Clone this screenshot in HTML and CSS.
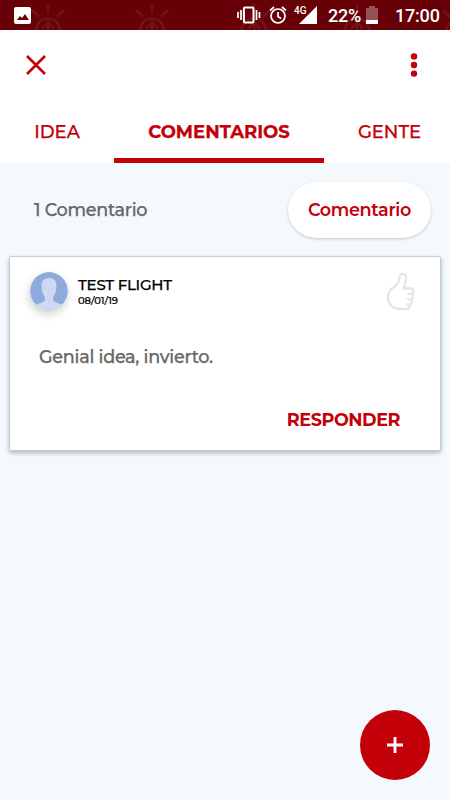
FILE: index.html
```html
<!DOCTYPE html>
<html lang="es">
<head>
<meta charset="utf-8">
<title>Comentarios</title>
<link rel="stylesheet" href="styles.css">
</head>
<body>
<div class="screen">
  <header class="status">
    <svg class="pattern" width="450" height="30" viewBox="0 0 450 30" aria-hidden="true">
      <defs>
        <g id="sun" fill="none" stroke="#721219" stroke-width="2.500" stroke-linecap="round">
          <path d="M-12.500 30A12.700 14 0 0 1 12.500 30M0 5v8M-15 11l5 5M15 11l-5 5M0 22v8M-5 28l5-6 5 6"/>
        </g>
      </defs>
      <use href="#sun" x="48"/><use href="#sun" x="152"/><use href="#sun" x="254"/><use href="#sun" x="357"/><use href="#sun" x="459"/>
    </svg>
    <svg class="photo" width="17" height="17" viewBox="0 0 17 17"><rect width="17" height="17" rx="2" fill="#fff"/><path d="M3 13l3-4 2 2 3-4 4 6z" fill="#680008"/></svg>
    <svg class="vibrate" width="24" height="18" viewBox="0 0 24 18" fill="none" stroke="#fff"><rect x="6.900" y="1.500" width="9.600" height="15" rx="1" stroke-width="2"/><path d="M1 6v6M4 4v10M19.500 4v10M22.500 6v6" stroke-width="1.700"/></svg>
    <svg class="alarm" width="18" height="18" viewBox="0 0 18 18" fill="none" stroke="#fff" stroke-width="1.700"><circle cx="9" cy="10" r="7"/><path d="M9 6v4.500l3 2M1 4.500L5 1M17 4.500L13 1"/></svg>
    <span class="network">4G</span>
    <svg class="signal" width="18" height="18" viewBox="0 0 18 18"><path d="M18 0v18H0z" fill="#fff"/></svg>
    <span class="percent">22%</span>
    <svg class="battery" width="12" height="18" viewBox="0 0 12 18"><path d="M3 0h6v2h3v16H0V2h3z" fill="#965157"/><path d="M0 14h12v4H0z" fill="#fff"/></svg>
    <span class="clock">17:00</span>
  </header>
  <div class="toolbar">
    <svg width="22" height="22" viewBox="0 0 22 22"><path d="M2 2l18 18M20 2L2 20" stroke="#c40009" stroke-width="2.600"/></svg>
    <svg width="8" height="24" viewBox="0 0 8 24" fill="#c40009"><circle cx="4" cy="3.400" r="3.200"/><circle cx="4" cy="12" r="3.200"/><circle cx="4" cy="20.600" r="3.200"/></svg>
  </div>
  <nav class="tabs">
    <a class="tab idea"><span>IDEA</span></a>
    <a class="tab active"><span>COMENTARIOS</span></a>
    <a class="tab people"><span>GENTE</span></a>
  </nav>
  <main>
    <div class="summary">
      <span class="count">1 Comentario</span>
      <button class="pill"><span>Comentario</span></button>
    </div>
    <article class="card">
      <div class="author">
        <svg class="avatar" width="38" height="38" viewBox="0 0 38 38"><defs><clipPath id="round"><circle cx="19" cy="19" r="19"/></clipPath></defs><g clip-path="url(#round)"><path d="M0 0h38v38H0z" fill="#8faadc"/><path d="M19 6c-5.400 0-7.700 3.500-7.400 8 .1 5 1.200 8.500 3.200 10.500v3.200c0 2-3 2.800-6.300 4-2.500.9-3.500 2-4 4.100V40h29v-4.200c-.5-2.100-1.500-3.200-4-4.100-3.300-1.200-6.300-2-6.300-4v-3.200c2-2 3.100-5.500 3.200-10.500C26.700 9.500 24.400 6 19 6z" fill="#cdd9f0"/></g></svg>
        <div class="who"><span class="name">TEST FLIGHT</span><span class="date">08/01/19</span></div>
        <svg class="like" width="30" height="40" viewBox="0 0 30 40" fill="none" stroke="#e6e6e6" stroke-width="2.300" stroke-linejoin="round" stroke-linecap="round"><path d="M14 37C6 37 2 31.500 2 25.500c0-6 3-8.500 7.500-11.500C12 12 13 9.500 13.600 5c.4-4.500 6.500-4.200 6.500.7 0 4.300-1.300 7.300-2.500 10.800H25c3.500 0 3.500 4.800 0 5.500h-2.500H25c3.200.5 2.700 5-.5 5.300H22h2c3 .5 2.500 4.800-.5 5H21h1.500c2.500.7 1.500 4.700-2 4.700z"/></svg>
      </div>
      <p class="comment">Genial idea, invierto.</p>
      <button class="reply">RESPONDER</button>
    </article>
  </main>
  <button class="fab" aria-label="Agregar"><svg width="16" height="16" viewBox="0 0 16 16"><path d="M8 0v16M0 8h16" stroke="#fff" stroke-width="2.800"/></svg></button>
</div>
</body>
</html>
```
FILE: styles.css
```css
* { box-sizing: border-box; }
body { margin: 0; font-family: Montserrat, Inter, sans-serif; }
button { border: 0; background: none; font: inherit; padding: 0; }
svg { display: block; flex: none; }
span, p { white-space: nowrap; }
.screen { position: relative; width: 450px; height: 800px; background: #f3f9fc; overflow: hidden; display: flex; flex-direction: column; }
.status { position: relative; height: 30px; background: #680008; color: #fff; font-family: Roboto, sans-serif; display: flex; align-items: center; padding-left: 14px; flex: none; }
.status > * { position: relative; }
.status > .pattern { position: absolute; left: 0; top: 0; }
.vibrate { margin-left: 206px; }
.alarm { margin-left: 8px; }
.network { font-size: 10px; font-weight: 500; line-height: 10px; margin: -9px 0 0 7px; width: 12px; }
.signal { margin-left: -7px; }
.percent { font-size: 18px; font-weight: 500; letter-spacing: -.2px; margin-left: 11px; width: 34px; line-height: 30px; padding-top: 1px; }
.battery { margin-left: 4px; }
.clock { font-size: 18px; font-weight: 500; letter-spacing: -.2px; margin-left: 17px; line-height: 30px; padding-top: 1px; }
.toolbar { height: 70px; background: #fff; display: flex; align-items: center; justify-content: space-between; padding: 0 32px 0 25px; flex: none; }
.tabs { height: 63px; background: #fff; display: flex; color: #c40009; font-size: 18px; font-weight: 500; flex: none; }
.tab { display: flex; align-items: center; justify-content: center; height: 63px; -webkit-text-stroke: .25px #c40009; }
.idea { width: 114px; }
.active { width: 210px; border-bottom: 5px solid #c40009; padding-top: 5px; font-weight: 700; }
.people { width: 126px; padding-left: 5px; }
.summary { height: 93px; display: flex; align-items: center; justify-content: space-between; padding: 0 19px 0 34px; }
.count { color: #666; font-size: 17.600px; line-height: 24px; margin-top: 1px; font-weight: 500; letter-spacing: -.28px; -webkit-text-stroke: .25px #666; }
.pill { width: 143px; height: 56px; border-radius: 28px; background: #fff; color: #c40009; font-size: 17.600px; line-height: 24px; padding-top: 1px; font-weight: 600; letter-spacing: -.35px; box-shadow: 0 1px 3px rgba(0,0,0,.2); }
.card { margin: 0 9px; width: 432px; height: 195px; background: #fff; border: 1px solid #c9cccc; border-radius: 2px; box-shadow: 0 2px 4px rgba(0,0,0,.28); display: flex; flex-direction: column; }
.author { display: flex; height: 70px; padding: 15px 24px 0 20px; }
.avatar { border-radius: 50%; box-shadow: -1px 4px 10px rgba(0,0,0,.2); }
.who { display: flex; flex-direction: column; margin: 2px 0 0 10px; }
.name { font-size: 15px; line-height: 21px; font-weight: 500; letter-spacing: -.24px; -webkit-text-stroke: .25px #000; }
.date { font-size: 10px; line-height: 11px; font-weight: 500; letter-spacing: -.08px; -webkit-text-stroke: .2px #000; }
.like { margin-left: auto; }
.comment { margin: 18px 0 0 29px; color: #666; font-size: 17.600px; line-height: 24px; font-weight: 500; letter-spacing: -.27px; -webkit-text-stroke: .25px #666; }
.reply { align-self: flex-end; margin: 39px 40px 0 0; color: #c40009; font-size: 17.600px; line-height: 24px; font-weight: 700; letter-spacing: -.45px; }
.fab { position: absolute; left: 360px; top: 710px; width: 70px; height: 70px; border-radius: 50%; background: #c40009; display: flex; align-items: center; justify-content: center; }
```
